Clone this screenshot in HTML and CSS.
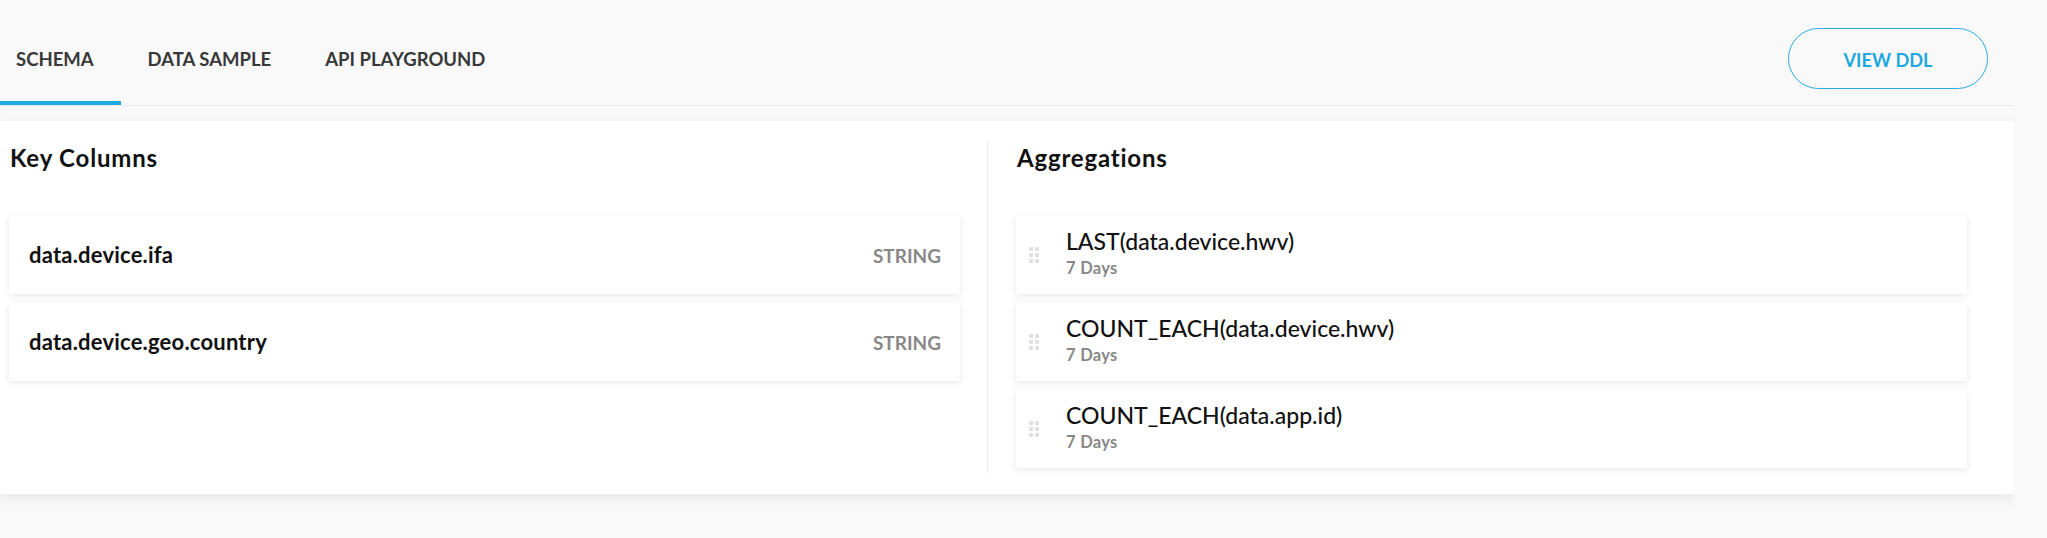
FILE: index.html
```html
<!DOCTYPE html>
<html>
<head>
<meta charset="utf-8">
<link rel="stylesheet" href="styles.css">
</head>
<body>
<div class="page">
  <div class="header">
    <nav class="tabs">
      <div class="tab active">SCHEMA</div>
      <div class="tab">DATA SAMPLE</div>
      <div class="tab">API PLAYGROUND</div>
    </nav>
    <button class="btn-ddl">VIEW DDL</button>
  </div>
  <div class="card">
    <section class="col col-left">
      <h2 class="col-title">Key Columns</h2>
      <div class="rows">
        <div class="key-row"><span class="key-name">data.device.ifa</span><span class="key-type">STRING</span></div>
        <div class="key-row"><span class="key-name">data.device.geo.country</span><span class="key-type">STRING</span></div>
      </div>
    </section>
    <div class="divider"></div>
    <section class="col col-right">
      <h2 class="col-title">Aggregations</h2>
      <div class="rows">
        <div class="agg-row">
          <div class="handle"><i></i><i></i><i></i><i></i><i></i><i></i></div>
          <div class="agg-text"><div class="agg-name">LAST(data.device.hwv)</div><div class="agg-sub">7 Days</div></div>
        </div>
        <div class="agg-row">
          <div class="handle"><i></i><i></i><i></i><i></i><i></i><i></i></div>
          <div class="agg-text"><div class="agg-name">COUNT_EACH(data.device.hwv)</div><div class="agg-sub">7 Days</div></div>
        </div>
        <div class="agg-row">
          <div class="handle"><i></i><i></i><i></i><i></i><i></i><i></i></div>
          <div class="agg-text"><div class="agg-name">COUNT_EACH(data.app.id)</div><div class="agg-sub">7 Days</div></div>
        </div>
      </div>
    </section>
  </div>
</div>
</body>
</html>
```
FILE: styles.css
```css
* { box-sizing: border-box; }
html, body {
  margin: 0;
  padding: 0;
  background: #f9f9f9;
  font-family: Lato, "Open Sans", sans-serif;
  color: #111;
}
.page {
  width: 2014px;
  height: 538px;
  overflow: hidden;
}
.header {
  height: 106px;
  display: flex;
  align-items: flex-end;
  justify-content: space-between;
  border-bottom: 1px solid #e8e8e8;
}
.tabs {
  display: flex;
  margin-left: -11px;
}
.tab {
  font-size: 18.5px;
  font-weight: 700;
  line-height: 20px;
  color: #383838;
  padding: 0 27px 32px;
  border-bottom: 4px solid transparent;
}
.tab.active {
  border-bottom-color: #1ea9e1;
}
.btn-ddl {
  align-self: flex-start;
  margin-top: 28px;
  margin-right: 26px;
  width: 200px;
  height: 61px;
  border: 1.5px solid #29abe2;
  border-radius: 31px;
  background: transparent;
  color: #1ea7e0;
  font-family: Lato, "Open Sans", sans-serif;
  font-size: 18.2px;
  font-weight: 700;
  padding: 2px 0 0;
}
.card {
  margin-top: 15px;
  height: 373px;
  background: #fff;
  box-shadow: 0 4px 14px rgba(0, 0, 0, 0.08);
  display: flex;
  padding: 20px 47px 21px 9px;
}
.col {
  width: 951px;
  padding-top: 3px;
}
.col-left { margin-right: 27px; }
.col-right { margin-left: 28px; }
.divider {
  width: 1px;
  background: #ececec;
}
.col-title {
  margin: 0 0 44px 1px;
  font-size: 24px;
  line-height: 28px;
  font-weight: 700;
  letter-spacing: 0.8px;
  color: #111;
}
.rows {
  display: flex;
  flex-direction: column;
  gap: 9px;
}
.key-row, .agg-row {
  height: 78px;
  background: #fff;
  box-shadow: 0 2px 7px rgba(0, 0, 0, 0.09);
  display: flex;
}
.key-row {
  align-items: center;
  justify-content: space-between;
  padding: 0 19px 0 20px;
}
.key-name {
  font-size: 22px;
  font-weight: 700;
  letter-spacing: 0.2px;
  color: #111;
  margin-top: -2px;
}
.key-type {
  font-size: 19px;
  font-weight: 700;
  color: #888;
}
.agg-row {
  align-items: flex-start;
  padding-left: 13px;
}
.handle {
  display: grid;
  grid-template-columns: 4px 4px;
  grid-auto-rows: 4px;
  gap: 2px;
  margin-top: 31px;
  margin-right: 27px;
}
.handle i {
  display: block;
  background: #e0e0e0;
  border-radius: 1px;
}
.agg-text {
  display: flex;
  flex-direction: column;
  padding-top: 12px;
}
.agg-name {
  font-size: 23px;
  line-height: 26px;
  font-weight: 500;
  color: #111;
}
.agg-sub {
  margin-top: 5px;
  font-size: 16.5px;
  line-height: 18px;
  font-weight: 700;
  letter-spacing: 0.3px;
  color: #888;
}
```
